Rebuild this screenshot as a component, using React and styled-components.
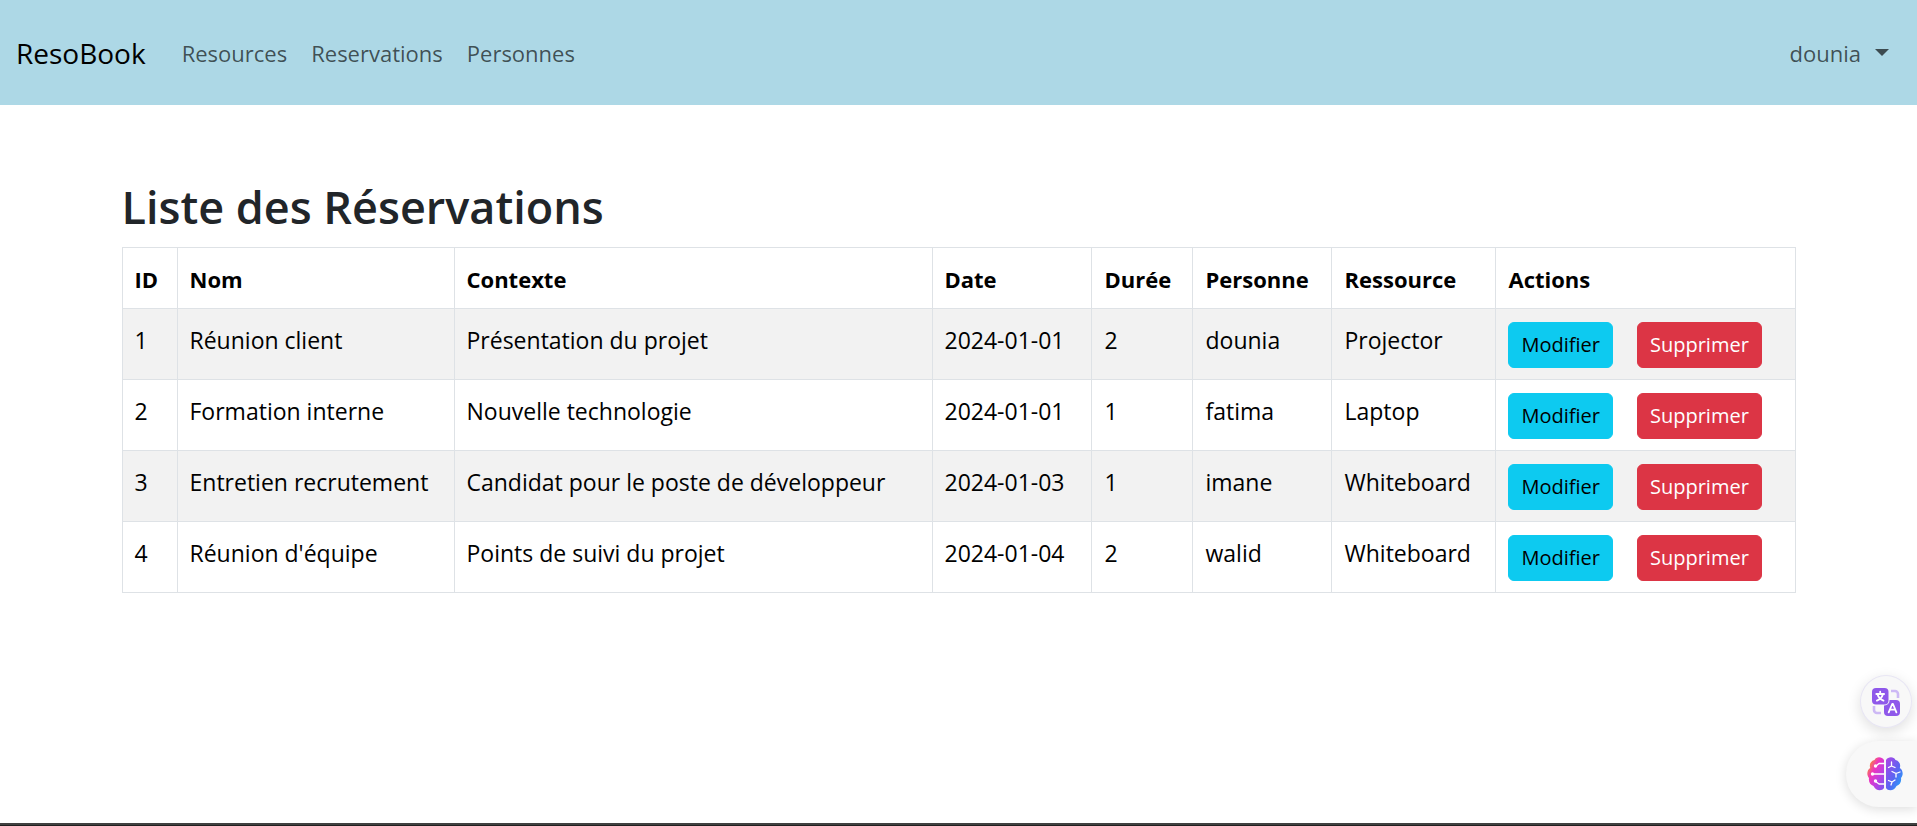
import React from "react";
import styled, { createGlobalStyle } from "styled-components";

const GlobalStyle = createGlobalStyle`
  *, *::before, *::after { box-sizing: border-box; }
  body {
    margin: 0;
    background: #fff;
    color: #212529;
    font-family: "Segoe UI", "Open Sans", "Noto Sans", sans-serif;
    font-size: 23px;
    line-height: 36px;
  }
`;

const Page = styled.div`
  min-height: 100vh;
  display: flex;
  flex-direction: column;
`;

const Navbar = styled.nav`
  display: flex;
  align-items: center;
  min-height: 105px;
  padding: 12px 16px;
  background: #add8e6;
  font-size: 22px;
`;

const Brand = styled.a`
  margin-right: 24px;
  color: #000;
  font-size: 28px;
  line-height: 44px;
  text-decoration: none;
`;

const NavList = styled.ul`
  display: flex;
  flex: 1;
  margin: 0;
  padding: 0;
  list-style: none;
`;

const NavLink = styled.a`
  display: block;
  padding: 12px;
  color: rgba(0, 0, 0, 0.65);
  text-decoration: none;
`;

const UserMenu = styled.button`
  display: flex;
  align-items: center;
  gap: 14px;
  padding: 12px;
  border: 0;
  background: none;
  color: rgba(0, 0, 0, 0.65);
  font: inherit;
  cursor: pointer;
`;

const Caret = styled.span`
  border-top: 7px solid currentColor;
  border-left: 7px solid transparent;
  border-right: 7px solid transparent;
`;

const Main = styled.main`
  flex: 1;
  width: 100%;
  max-width: 1710px;
  margin: 0 auto;
  padding: 72px 18px 0;
`;

const Title = styled.h1`
  margin: 0 0 10px;
  font-size: 45px;
  font-weight: 600;
  line-height: 60px;
`;

const Table = styled.table`
  width: 100%;
  table-layout: fixed;
  border-collapse: collapse;
  color: #000;
`;

const Column = styled.col`
  width: ${(p) => p.$share}%;
`;

const HeadCell = styled.th`
  padding: 13px 12px 11px;
  border: 1px solid #dee2e6;
  font-weight: 700;
  font-size: 22px;
  text-align: left;
`;

const Row = styled.tr`
  &:nth-child(odd) { background: #f2f2f2; }
`;

const Cell = styled.td`
  padding: 13px 12px 11px;
  border: 1px solid #dee2e6;
  vertical-align: top;
`;

const Actions = styled.div`
  display: flex;
  gap: 24px;
`;

const ActionButton = styled.button`
  padding: 6px 12px;
  border: 1px solid ${(p) => (p.$danger ? "#dc3545" : "#0dcaf0")};
  border-radius: 6px;
  background: ${(p) => (p.$danger ? "#dc3545" : "#0dcaf0")};
  color: ${(p) => (p.$danger ? "#fff" : "#000")};
  font: inherit;
  font-size: 20px;
  line-height: 32px;
  cursor: pointer;
`;

const BottomEdge = styled.footer`
  height: 3px;
  border-top: 2px solid #404040;
  background: #202020;
`;

const FloatingTools = styled.aside`
  position: fixed;
  right: 0;
  bottom: 19px;
  display: flex;
  flex-direction: column;
  align-items: flex-end;
  gap: 13px;
`;

const ToolButton = styled.button`
  display: flex;
  align-items: center;
  border: 0;
  padding: 0;
  background: #f8f8f8;
  cursor: pointer;
`;

const TranslateButton = styled(ToolButton)`
  justify-content: center;
  width: 52px;
  height: 53px;
  margin-right: 5px;
  border: 1px solid #e8e6f4;
  border-radius: 50%;
  box-shadow: 0 4px 14px rgba(0, 0, 0, 0.13);
`;

const AssistantButton = styled(ToolButton)`
  width: 71px;
  height: 66px;
  padding-left: 21px;
  border-radius: 33px 0 0 33px;
  box-shadow: 0 2px 12px rgba(0, 0, 0, 0.14);
`;

const TranslateIcon = () => (
  <svg width="28" height="28" viewBox="0 0 28 28" aria-hidden="true">
    <path d="M19 3h4a3 3 0 0 1 3 3v4M2 18v4a3 3 0 0 0 3 3h4" fill="none" stroke="#cdb9f5" strokeWidth="2.6" />
    <rect x="12" y="12" width="16" height="16" rx="4" fill="#8f58ea" />
    <rect x="-1" y="-1" width="18.5" height="18.5" rx="5" fill="#f8f8f8" />
    <rect x="0" y="0" width="16.5" height="16.5" rx="4" fill="#8f58ea" />
    <g fill="none" stroke="#fff" strokeWidth="1.8" strokeLinecap="round" strokeLinejoin="round">
      <path d="M8.2 3.6v2M4.3 6h7.8M5.5 6.3c.8 3 2.7 5 6 6.3M10.9 6.3c-.8 3-2.700 5-6 6.300" />
      <path d="M16.700 24.300l3.500-8.300h.8l3.400 8.300M18 21.600h5.200" />
    </g>
  </svg>
);

const BrainIcon = () => (
  <svg width="36" height="34" viewBox="0 0 36 34" aria-hidden="true">
    <defs>
      <linearGradient id="brain-left" x1="0" y1="0" x2="1" y2="1">
        <stop offset="0.1" stopColor="#fb9a20" />
        <stop offset="0.38" stopColor="#ee35bd" />
        <stop offset="0.65" stopColor="#c13ee0" />
        <stop offset="1" stopColor="#7558f0" />
      </linearGradient>
      <linearGradient id="brain-right" x1="0" y1="0" x2="1" y2="1">
        <stop offset="0.1" stopColor="#a14ae8" />
        <stop offset="0.55" stopColor="#5866f2" />
        <stop offset="1" stopColor="#18b4fb" />
      </linearGradient>
    </defs>
    <path
      d="M17 3C15-.5 9-.6 7.500 3 3.600 4 2 7.500 3.200 11 0 13-.7 18 2 21c-.7 4 1.500 7 4.500 8C8.500 34 15 34.500 17 31z"
      fill="url(#brain-left)"
    />
    <path
      d="M19 3c2-3.500 8-3.600 9.500 0 3.900 1 5.500 4.500 4.300 8 3.200 2 3.900 7 1.200 10 .7 4-1.500 7-4.500 8-2 5-8.500 5.500-10.500 2z"
      fill="url(#brain-right)"
    />
    <g fill="none" stroke="#fff" strokeWidth="1.300" strokeLinecap="round" strokeLinejoin="round">
      <path d="M17 6.500h-5L9 9M17 17H6M17 27h-5l-4-3" />
      <path d="M24.500 5v4M21.500 10.500l3-1.500 3.500 1.500M25 14.500l4 2 4-1.500M29 16.500V20M21.500 23.500l3.500 1.500 3-2M25 25l-1 3" />
    </g>
    <g fill="#fff">
      <circle cx="8.500" cy="9" r="1.700" />
      <circle cx="5.500" cy="17" r="1.700" />
      <circle cx="8.500" cy="24" r="1.700" />
    </g>
  </svg>
);

const columns = [
  ["ID", 55],
  ["Nom", 277],
  ["Contexte", 478],
  ["Date", 160],
  ["Durée", 101],
  ["Personne", 139],
  ["Ressource", 164],
  ["Actions", 299],
];
const total = columns.reduce((sum, [, w]) => sum + w, 0);

const reservations = [
  ["1", "Réunion client", "Présentation du projet", "2024-01-01", "2", "dounia", "Projector"],
  ["2", "Formation interne", "Nouvelle technologie", "2024-01-01", "1", "fatima", "Laptop"],
  ["3", "Entretien recrutement", "Candidat pour le poste de développeur", "2024-01-03", "1", "imane", "Whiteboard"],
  ["4", "Réunion d'équipe", "Points de suivi du projet", "2024-01-04", "2", "walid", "Whiteboard"],
];

export default function App() {
  return (
    <Page>
      <GlobalStyle />
      <Navbar>
        <Brand href="#">ResoBook</Brand>
        <NavList>
          {["Resources", "Reservations", "Personnes"].map((label) => (
            <li key={label}>
              <NavLink href="#">{label}</NavLink>
            </li>
          ))}
        </NavList>
        <UserMenu type="button">
          dounia <Caret />
        </UserMenu>
      </Navbar>
      <Main>
        <Title>Liste des Réservations</Title>
        <Table>
          <colgroup>
            {columns.map(([name, w]) => (
              <Column key={name} $share={(w / total) * 100} />
            ))}
          </colgroup>
          <thead>
            <tr>
              {columns.map(([name]) => (
                <HeadCell key={name} scope="col">{name}</HeadCell>
              ))}
            </tr>
          </thead>
          <tbody>
            {reservations.map((r) => (
              <Row key={r[0]}>
                {r.map((value, i) => (
                  <Cell key={i}>{value}</Cell>
                ))}
                <Cell>
                  <Actions>
                    <ActionButton type="button">Modifier</ActionButton>
                    <ActionButton type="button" $danger>Supprimer</ActionButton>
                  </Actions>
                </Cell>
              </Row>
            ))}
          </tbody>
        </Table>
      </Main>
      <BottomEdge />
      <FloatingTools>
        <TranslateButton type="button" aria-label="Traduire">
          <TranslateIcon />
        </TranslateButton>
        <AssistantButton type="button" aria-label="Assistant">
          <BrainIcon />
        </AssistantButton>
      </FloatingTools>
    </Page>
  );
}
